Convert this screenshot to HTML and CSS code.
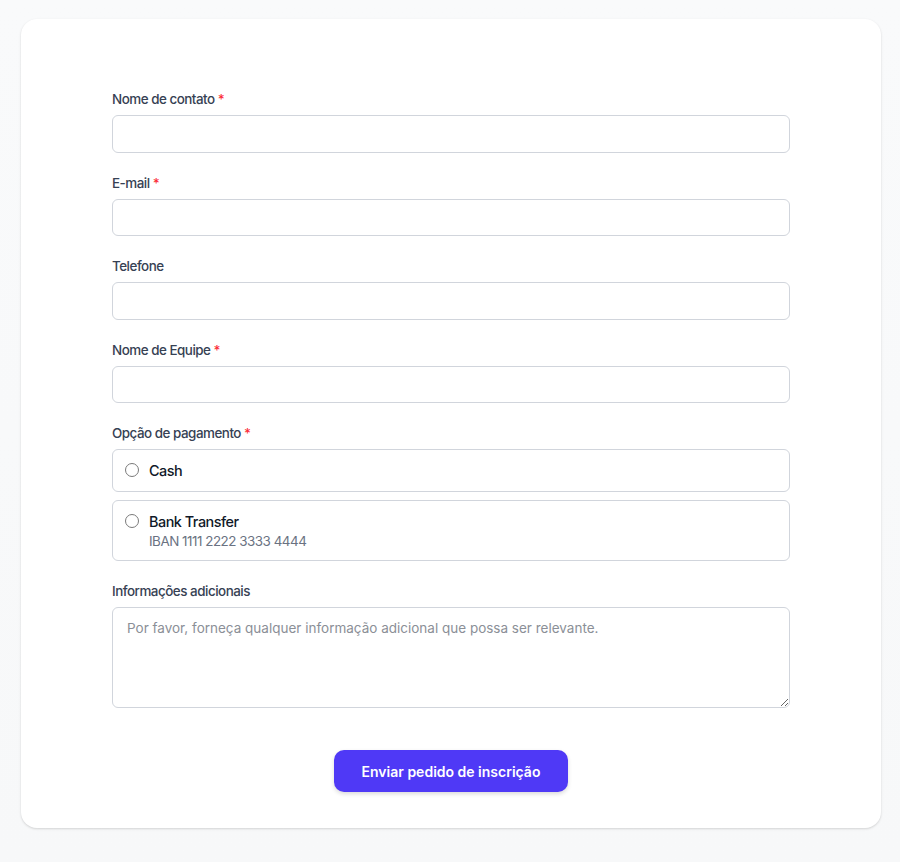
FILE: index.html
```html
<!DOCTYPE html>
<html lang="pt">
<head>
  <meta charset="UTF-8">
  <meta name="viewport" content="width=device-width, initial-scale=1.0">
  <title>Pedido de inscrição</title>
  <link rel="stylesheet" href="styles.css">
</head>
<body>
  <div class="card">
    <form class="form">
      <div class="field">
        <label class="label" for="nome">Nome de contato <span class="req">*</span></label>
        <input class="input" id="nome" type="text">
      </div>
      <div class="field">
        <label class="label" for="email">E-mail <span class="req">*</span></label>
        <input class="input" id="email" type="email">
      </div>
      <div class="field">
        <label class="label" for="tel">Telefone</label>
        <input class="input" id="tel" type="tel">
      </div>
      <div class="field">
        <label class="label" for="equipe">Nome de Equipe <span class="req">*</span></label>
        <input class="input" id="equipe" type="text">
      </div>
      <div class="field">
        <div class="label">Opção de pagamento <span class="req">*</span></div>
        <div class="options">
          <label class="option">
            <input class="radio" type="radio" name="pagamento">
            <span class="option-text">
              <span class="option-title">Cash</span>
            </span>
          </label>
          <label class="option">
            <input class="radio" type="radio" name="pagamento">
            <span class="option-text">
              <span class="option-title">Bank Transfer</span>
              <span class="option-desc">IBAN 1111 2222 3333 4444</span>
            </span>
          </label>
        </div>
      </div>
      <div class="field">
        <label class="label" for="info">Informações adicionais</label>
        <textarea class="textarea" id="info" placeholder="Por favor, forneça qualquer informação adicional que possa ser relevante."></textarea>
      </div>
      <div class="actions">
        <button class="button" type="button">Enviar pedido de inscrição</button>
      </div>
    </form>
  </div>
</body>
</html>
```

FILE: styles.css
```css
* {
  box-sizing: border-box;
}
body {
  margin: 0;
  font-family: Inter, "Noto Sans", sans-serif;
  letter-spacing: -0.03em;
  background: linear-gradient(#f9fafb, #f7f8f9);
  color: #101828;
  padding: 19px 19px 34px 21px;
}
.card {
  background-color: #fff;
  border-radius: 16px;
  box-shadow: 0 1px 3px rgba(0, 0, 0, 0.1), 0 1px 2px rgba(0, 0, 0, 0.06);
  padding: 70px 0 36px;
}
.form {
  width: 678px;
  margin: 0 auto;
}
.field {
  margin-bottom: 20px;
}
.label {
  display: block;
  font-size: 13.4px;
  line-height: 20px;
  font-weight: 500;
  color: #364153;
  margin-bottom: 6px;
}
.req {
  color: #fb2c36;
}
.input {
  display: block;
  width: 100%;
  height: 37.5px;
  border: 1px solid #d1d5dc;
  border-radius: 6px;
  padding: 8px 12px;
  font: inherit;
  font-size: 14.4px;
  outline: none;
}
.options {
  display: flex;
  flex-direction: column;
  gap: 8px;
}
.option {
  display: flex;
  align-items: flex-start;
  gap: 10px;
  border: 1px solid #d1d5dc;
  border-radius: 6px;
  padding: 11px 12px 10px;
  cursor: pointer;
}
.radio {
  appearance: none;
  width: 14px;
  height: 14px;
  margin: 2px 0 0;
  border: 1px solid #7a7a7a;
  border-radius: 50%;
  flex-shrink: 0;
}
.option-text {
  display: flex;
  flex-direction: column;
}
.option-title {
  font-size: 14.4px;
  line-height: 20px;
  font-weight: 500;
  color: #101828;
}
.option-desc {
  font-size: 13.4px;
  line-height: 18px;
  color: #6a7282;
}
.textarea {
  display: block;
  width: 100%;
  height: 101px;
  border: 1px solid #d1d5dc;
  border-radius: 6px;
  padding: 9px 14px;
  font: inherit;
  font-size: 13.5px;
  line-height: 22px;
  outline: none;
}
.textarea::placeholder {
  color: #8b8f97;
}
.actions {
  display: flex;
  justify-content: center;
  padding-top: 22px;
}
.button {
  background-color: #4f39f6;
  color: #fff;
  border: none;
  border-radius: 10px;
  height: 42px;
  padding: 0 28px;
  font: inherit;
  font-size: 14px;
  font-weight: 600;
  box-shadow: 0 2px 4px rgba(0, 0, 0, 0.15);
  cursor: pointer;
}
```
